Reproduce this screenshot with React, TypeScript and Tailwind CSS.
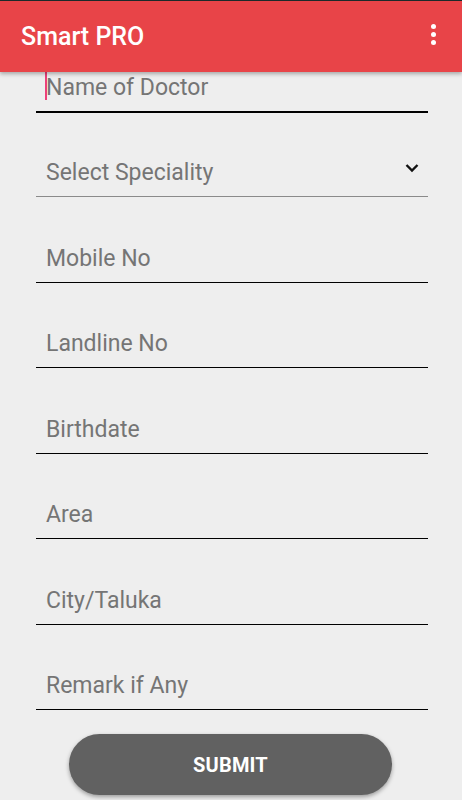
import React from 'react';

const fields = ['Mobile No', 'Landline No', 'Birthdate', 'Area', 'City/Taluka', 'Remark if Any'];

const App: React.FC = () => {
    return (
        <div className="min-h-[800px] bg-[#eeeeee] font-['Roboto',sans-serif] overflow-hidden">
            <div className="relative z-10 border-t border-[#1b2a2a] bg-[#e84448] h-[72px] flex items-center justify-between pl-[21px] pr-[26px] shadow-[0_2px_4px_rgba(0,0,0,0.3)]">
                <span className="text-white text-[25px] font-medium leading-none -mt-[1px]">Smart PRO</span>
                <div className="flex flex-col gap-[3px] items-center -mt-[5px]">
                    <span className="w-[5px] h-[5px] rounded-full bg-white"></span>
                    <span className="w-[5px] h-[5px] rounded-full bg-white"></span>
                    <span className="w-[5px] h-[5px] rounded-full bg-white"></span>
                </div>
            </div>

            <div className="ml-[36px] mr-[34px]">
                {/* focused field, scrolled partly under the toolbar */}
                <div className="relative h-[41px] border-b-2 border-black flex items-end pb-[10px] pl-[10px]">
                    <span className="absolute left-[9px] bottom-[11px] w-[2px] h-[28px] bg-[#ec407a]"></span>
                    <span className="text-[23px] leading-[26px] text-[#757575]">Name of Doctor</span>
                </div>

                <div className="relative h-[84px] border-b border-[#8a8a8a] flex items-end pb-[10px] pl-[10px]">
                    <span className="text-[23px] leading-[26px] text-[#757575]">Select Speciality</span>
                    <svg className="absolute right-[9px] top-[50px]" width="14" height="10" viewBox="0 0 14 10">
                        <polyline points="1.5,2 7,7.5 12.5,2" fill="none" stroke="#111" strokeWidth="2.4"/>
                    </svg>
                </div>

                {fields.map((label) => (
                    <div key={label} className="h-[85.5px] border-b border-black flex items-end pb-[10px] pl-[10px]">
                        <span className="text-[23px] leading-[26px] text-[#757575]">{label}</span>
                    </div>
                ))}
            </div>

            <div className="flex justify-start pl-[69px] mt-[24px]">
                <button className="w-[323px] h-[61px] rounded-full bg-[#616161] text-white text-[20px] font-bold tracking-[0.2px] shadow-[0_2px_4px_rgba(0,0,0,0.35)]">
                    SUBMIT
                </button>
            </div>
        </div>
    );
};

export default App;
